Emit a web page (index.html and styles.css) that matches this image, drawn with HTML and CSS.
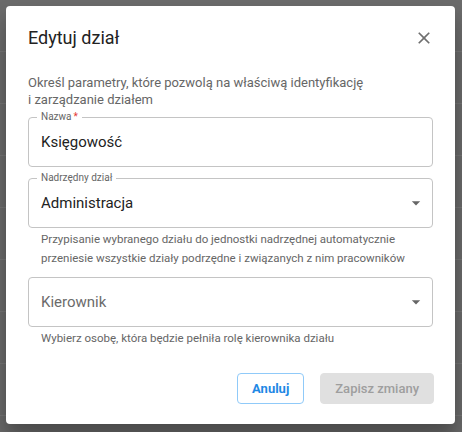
FILE: index.html
```html
<!doctype html>
<html lang="pl">
  <head>
    <meta charset="UTF-8" />
    <meta name="viewport" content="width=device-width, initial-scale=1.0" />
    <title>Edytuj dział</title>
    <link rel="stylesheet" href="styles.css">
  </head>
  <body>
    <div class="backdrop">
      <div class="dialog">
        <div class="dialog-header">
          <h2 class="dialog-title">Edytuj dział</h2>
          <button class="close-btn" aria-label="Zamknij">
            <svg viewBox="0 0 24 24" width="20" height="20">
              <path d="M19 6.41 17.59 5 12 10.59 6.41 5 5 6.41 10.59 12 5 17.59 6.41 19 12 13.41 17.59 19 19 17.59 13.41 12z" fill="currentColor" />
            </svg>
          </button>
        </div>

        <p class="dialog-desc">
          Określ parametry, które pozwolą na właściwą identyfikację<br />
          i zarządzanie działem
        </p>

        <div class="field">
          <span class="field-label">Nazwa<span class="required">*</span></span>
          <span class="field-value">Księgowość</span>
        </div>

        <div class="field field-select">
          <span class="field-label">Nadrzędny dział</span>
          <span class="field-value">Administracja</span>
          <svg class="arrow" viewBox="0 0 24 24" width="20" height="20">
            <path d="M7 10l5 5 5-5z" fill="currentColor" />
          </svg>
        </div>
        <p class="helper">
          Przypisanie wybranego działu do jednostki nadrzędnej automatycznie
          przeniesie wszystkie działy podrzędne i związanych z nim pracowników
        </p>

        <div class="field field-select">
          <span class="field-value placeholder">Kierownik</span>
          <svg class="arrow" viewBox="0 0 24 24" width="20" height="20">
            <path d="M7 10l5 5 5-5z" fill="currentColor" />
          </svg>
        </div>
        <p class="helper">Wybierz osobę, która będzie pełniła rolę kierownika działu</p>

        <div class="dialog-actions">
          <button class="btn btn-outline">Anuluj</button>
          <button class="btn btn-disabled" disabled>Zapisz zmiany</button>
        </div>
      </div>
    </div>
  </body>
</html>
```

FILE: styles.css
```css
* {
  box-sizing: border-box;
  margin: 0;
  padding: 0;
  font-family: Roboto, "Liberation Sans", sans-serif;
}

body {
  background-color: #6b6b6b;
}

.backdrop {
  min-height: 432px;
  padding: 6px;
  background-color: #6b6b6b;
  background-image: repeating-linear-gradient(
    to bottom,
    transparent 0,
    transparent 51px,
    #767676 51px,
    #767676 52px,
    transparent 52px,
    transparent 50.5px
  );
}

.dialog {
  width: 449px;
  height: 418px;
  background-color: #ffffff;
  border-radius: 4px;
  box-shadow: 0 11px 15px rgba(0, 0, 0, 0.2), 0 24px 38px rgba(0, 0, 0, 0.14);
  padding: 16px 22px 20px;
  display: flex;
  flex-direction: column;
}

.dialog-header {
  display: flex;
  justify-content: space-between;
  align-items: center;
  height: 32px;
}

.dialog-title {
  font-size: 18px;
  font-weight: 400;
  line-height: 32px;
  color: #222;
}

.close-btn {
  background: none;
  border: none;
  color: #6f6f6f;
  display: flex;
  margin-right: -1px;
  cursor: pointer;
}

.dialog-desc {
  margin-top: 20px;
  font-size: 13px;
  line-height: 17px;
  color: #666;
}

.field {
  position: relative;
  height: 50px;
  margin-top: 9px;
  border: 1px solid #c4c4c4;
  border-radius: 4px;
  display: flex;
  align-items: center;
  padding: 0 6px 0 12px;
}

.field + .field {
  margin-top: 11px;
}

.field-label {
  position: absolute;
  top: -7px;
  left: 8px;
  padding: 0 4px;
  background-color: #ffffff;
  font-size: 10px;
  line-height: 12px;
  color: #666;
}

.required {
  color: #e53935;
  margin-left: 2px;
}

.field-value {
  flex: 1;
  font-size: 15px;
  color: #222;
}

.placeholder {
  color: #6b6b6b;
}

.arrow {
  color: #666;
}

.helper {
  margin: 2px 0 0 13px;
  font-size: 11.5px;
  line-height: 19px;
  color: #666;
}

.helper + .field {
  margin-top: 9px;
}

.dialog-actions {
  margin-top: auto;
  margin-right: -1px;
  display: flex;
  justify-content: flex-end;
  gap: 16px;
}

.btn {
  height: 31px;
  padding: 0 14px;
  border-radius: 4px;
  font-size: 13px;
  font-weight: 500;
  cursor: pointer;
}

.btn-outline {
  background-color: #ffffff;
  border: 1px solid #90caf9;
  color: #1e88e5;
  font-weight: 700;
}

.btn-disabled {
  background-color: #e0e0e0;
  border: 1px solid #e0e0e0;
  color: #9e9e9e;
  cursor: default;
}
```
